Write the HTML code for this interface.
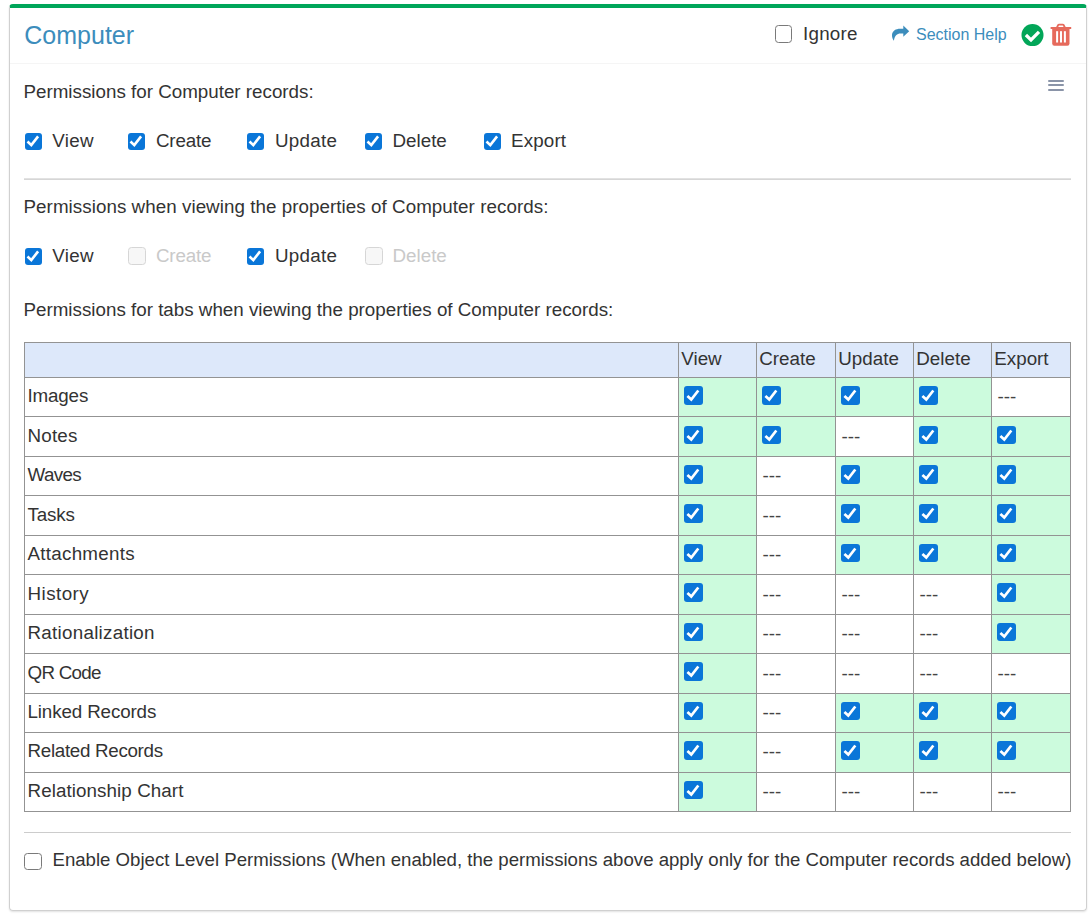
<!DOCTYPE html>
<html><head><meta charset="utf-8"><style>
html,body{margin:0;padding:0;background:#fff;width:1092px;height:919px;overflow:hidden;position:relative}
.t{position:absolute;white-space:nowrap;line-height:20px;font-family:'Liberation Sans', sans-serif}
.r{position:absolute}
.ic{position:absolute}
.card{position:absolute;left:9px;top:4px;width:1076px;height:902px;border:1px solid #d0d0d0;border-top:4px solid #00a65a;border-radius:4px;box-shadow:0 1px 2px rgba(0,0,0,0.12)}
.cb{position:absolute;background:#0a76d8;border-radius:3px;box-sizing:border-box}
.cb svg{display:block}
.cbe{position:absolute;box-sizing:border-box;border:1.5px solid #7a7a7a;border-radius:3.5px;background:#fff}
.cbd{position:absolute;box-sizing:border-box;border:1.5px solid #d6d6d6;border-radius:3.5px;background:#f7f7f7}
</style></head><body>
<div class="card"></div>
<div class="r" style="left:10px;top:63px;width:1076px;height:1px;background:#f5f5f5"></div>
<div class="t" style="left:24.3px;top:25px;font-size:25px;color:#3c8dbc;">Computer</div>
<div class="cbe" style="left:775px;top:25.2px;width:17.4px;height:17.4px"></div>
<div class="t" style="left:803px;top:24px;font-size:18.8px;color:#333;letter-spacing:0.25px">Ignore</div>
<svg class="ic" style="left:890px;top:22px" width="22" height="22" viewBox="0 0 22 22"><path d="M13.3 3.6 L19.2 9.2 L13.3 14.7 V11.4 H10.5 C7 11.4 4.6 13.6 3.9 18.8 C2.6 17 1.9 15 2 13 C2.3 8.8 6 6.8 10 6.8 H13.3 Z" fill="#3c8dbc"/></svg>
<div class="t" style="left:916px;top:25px;font-size:16px;color:#3c8dbc;">Section Help</div>
<svg class="ic" style="left:1020px;top:23px" width="25" height="25" viewBox="0 0 25 25"><circle cx="12.5" cy="12.1" r="11" fill="#02a658"/><path d="M5.9 12.0 L11 16.9 L19.0 8.9" fill="none" stroke="#fff" stroke-width="3.3"/></svg>
<svg class="ic" style="left:1049px;top:22px" width="24" height="26" viewBox="0 0 24 26"><path d="M1.6 5 H22.2 V7 H1.6 Z" fill="#e66a5c"/><path d="M6.9 5.6 L8.4 2.6 Q8.9 1.7 10 1.7 H13.8 Q14.9 1.7 15.4 2.6 L16.9 5.6 H14.9 L13.8 3.6 H10 L8.9 5.6 Z" fill="#e66a5c"/><path d="M3.2 6.5 H20.5 V21.6 Q20.5 23.8 18.3 23.8 H5.4 Q3.2 23.8 3.2 21.6 Z" fill="#e66a5c"/><rect x="7.1" y="9.2" width="2" height="11.3" fill="#fff"/><rect x="11.0" y="9.2" width="2" height="11.3" fill="#fff"/><rect x="14.9" y="9.2" width="2" height="11.3" fill="#fff"/></svg>
<div class="r" style="left:1048px;top:79.5px;width:15.5px;height:2px;background:#8a94a8;border-radius:1px"></div>
<div class="r" style="left:1048px;top:84.4px;width:15.5px;height:2px;background:#8a94a8;border-radius:1px"></div>
<div class="r" style="left:1048px;top:89.3px;width:15.5px;height:2px;background:#8a94a8;border-radius:1px"></div>
<div class="t" style="left:23.5px;top:82px;font-size:18.8px;color:#333;">Permissions for Computer records:</div>
<div class="cb" style="left:24.5px;top:133px;width:17px;height:17px"><svg width="100%" height="100%" viewBox="0 0 17 17"><path d="M2.5 8.5 L6.3 12.1 L13.1 3.4" fill="none" stroke="#fff" stroke-width="2.6" stroke-linecap="butt" stroke-linejoin="miter"/></svg></div>
<div class="t" style="left:52.3px;top:131px;font-size:18.8px;color:#333;letter-spacing:0.33px">View</div>
<div class="cb" style="left:128px;top:133px;width:17px;height:17px"><svg width="100%" height="100%" viewBox="0 0 17 17"><path d="M2.5 8.5 L6.3 12.1 L13.1 3.4" fill="none" stroke="#fff" stroke-width="2.6" stroke-linecap="butt" stroke-linejoin="miter"/></svg></div>
<div class="t" style="left:156px;top:131px;font-size:18.8px;color:#333;letter-spacing:-0.2px">Create</div>
<div class="cb" style="left:247px;top:133px;width:17px;height:17px"><svg width="100%" height="100%" viewBox="0 0 17 17"><path d="M2.5 8.5 L6.3 12.1 L13.1 3.4" fill="none" stroke="#fff" stroke-width="2.6" stroke-linecap="butt" stroke-linejoin="miter"/></svg></div>
<div class="t" style="left:275px;top:131px;font-size:18.8px;color:#333;letter-spacing:0.3px">Update</div>
<div class="cb" style="left:365px;top:133px;width:17px;height:17px"><svg width="100%" height="100%" viewBox="0 0 17 17"><path d="M2.5 8.5 L6.3 12.1 L13.1 3.4" fill="none" stroke="#fff" stroke-width="2.6" stroke-linecap="butt" stroke-linejoin="miter"/></svg></div>
<div class="t" style="left:392.5px;top:131px;font-size:18.8px;color:#333;letter-spacing:0px">Delete</div>
<div class="cb" style="left:483.5px;top:133px;width:17px;height:17px"><svg width="100%" height="100%" viewBox="0 0 17 17"><path d="M2.5 8.5 L6.3 12.1 L13.1 3.4" fill="none" stroke="#fff" stroke-width="2.6" stroke-linecap="butt" stroke-linejoin="miter"/></svg></div>
<div class="t" style="left:511px;top:131px;font-size:18.8px;color:#333;letter-spacing:0.15px">Export</div>
<div class="r" style="left:24px;top:178px;width:1047px;height:1px;background:#e2e2e2"></div>
<div class="r" style="left:24px;top:179px;width:1047px;height:1px;background:#d6d6d6"></div>
<div class="t" style="left:23.5px;top:197px;font-size:18.8px;color:#333;letter-spacing:0.05px">Permissions when viewing the properties of Computer records:</div>
<div class="cb" style="left:24.5px;top:248px;width:17px;height:17px"><svg width="100%" height="100%" viewBox="0 0 17 17"><path d="M2.5 8.5 L6.3 12.1 L13.1 3.4" fill="none" stroke="#fff" stroke-width="2.6" stroke-linecap="butt" stroke-linejoin="miter"/></svg></div>
<div class="t" style="left:52.3px;top:246px;font-size:18.8px;color:#333;letter-spacing:0.33px">View</div>
<div class="cbd" style="left:127.8px;top:247.2px;width:18.3px;height:18.3px"></div>
<div class="t" style="left:156px;top:246px;font-size:18.8px;color:#c9c9c9;letter-spacing:-0.2px">Create</div>
<div class="cb" style="left:247px;top:248px;width:17px;height:17px"><svg width="100%" height="100%" viewBox="0 0 17 17"><path d="M2.5 8.5 L6.3 12.1 L13.1 3.4" fill="none" stroke="#fff" stroke-width="2.6" stroke-linecap="butt" stroke-linejoin="miter"/></svg></div>
<div class="t" style="left:275px;top:246px;font-size:18.8px;color:#333;letter-spacing:0.3px">Update</div>
<div class="cbd" style="left:364.8px;top:247.2px;width:18.3px;height:18.3px"></div>
<div class="t" style="left:392.5px;top:246px;font-size:18.8px;color:#c9c9c9;letter-spacing:0px">Delete</div>
<div class="t" style="left:23.5px;top:300px;font-size:18.8px;color:#333;">Permissions for tabs when viewing the properties of Computer records:</div>
<div class="r" style="left:24px;top:342px;width:1047px;height:35px;background:#dde8fa"></div>
<div class="r" style="left:678px;top:377px;width:78px;height:39px;background:#ccfbdd"></div>
<div class="r" style="left:756px;top:377px;width:79px;height:39px;background:#ccfbdd"></div>
<div class="r" style="left:835px;top:377px;width:78px;height:39px;background:#ccfbdd"></div>
<div class="r" style="left:913px;top:377px;width:78px;height:39px;background:#ccfbdd"></div>
<div class="r" style="left:678px;top:416px;width:78px;height:40px;background:#ccfbdd"></div>
<div class="r" style="left:756px;top:416px;width:79px;height:40px;background:#ccfbdd"></div>
<div class="r" style="left:913px;top:416px;width:78px;height:40px;background:#ccfbdd"></div>
<div class="r" style="left:991px;top:416px;width:79px;height:40px;background:#ccfbdd"></div>
<div class="r" style="left:678px;top:456px;width:78px;height:39px;background:#ccfbdd"></div>
<div class="r" style="left:835px;top:456px;width:78px;height:39px;background:#ccfbdd"></div>
<div class="r" style="left:913px;top:456px;width:78px;height:39px;background:#ccfbdd"></div>
<div class="r" style="left:991px;top:456px;width:79px;height:39px;background:#ccfbdd"></div>
<div class="r" style="left:678px;top:495px;width:78px;height:40px;background:#ccfbdd"></div>
<div class="r" style="left:835px;top:495px;width:78px;height:40px;background:#ccfbdd"></div>
<div class="r" style="left:913px;top:495px;width:78px;height:40px;background:#ccfbdd"></div>
<div class="r" style="left:991px;top:495px;width:79px;height:40px;background:#ccfbdd"></div>
<div class="r" style="left:678px;top:535px;width:78px;height:39px;background:#ccfbdd"></div>
<div class="r" style="left:835px;top:535px;width:78px;height:39px;background:#ccfbdd"></div>
<div class="r" style="left:913px;top:535px;width:78px;height:39px;background:#ccfbdd"></div>
<div class="r" style="left:991px;top:535px;width:79px;height:39px;background:#ccfbdd"></div>
<div class="r" style="left:678px;top:574px;width:78px;height:40px;background:#ccfbdd"></div>
<div class="r" style="left:991px;top:574px;width:79px;height:40px;background:#ccfbdd"></div>
<div class="r" style="left:678px;top:614px;width:78px;height:39px;background:#ccfbdd"></div>
<div class="r" style="left:991px;top:614px;width:79px;height:39px;background:#ccfbdd"></div>
<div class="r" style="left:678px;top:653px;width:78px;height:40px;background:#ccfbdd"></div>
<div class="r" style="left:678px;top:693px;width:78px;height:39px;background:#ccfbdd"></div>
<div class="r" style="left:835px;top:693px;width:78px;height:39px;background:#ccfbdd"></div>
<div class="r" style="left:913px;top:693px;width:78px;height:39px;background:#ccfbdd"></div>
<div class="r" style="left:991px;top:693px;width:79px;height:39px;background:#ccfbdd"></div>
<div class="r" style="left:678px;top:732px;width:78px;height:40px;background:#ccfbdd"></div>
<div class="r" style="left:835px;top:732px;width:78px;height:40px;background:#ccfbdd"></div>
<div class="r" style="left:913px;top:732px;width:78px;height:40px;background:#ccfbdd"></div>
<div class="r" style="left:991px;top:732px;width:79px;height:40px;background:#ccfbdd"></div>
<div class="r" style="left:678px;top:772px;width:78px;height:39px;background:#ccfbdd"></div>
<div class="r" style="left:24px;top:342px;width:1047px;height:1px;background:#939393"></div>
<div class="r" style="left:24px;top:377px;width:1047px;height:1px;background:#939393"></div>
<div class="r" style="left:24px;top:416px;width:1047px;height:1px;background:#939393"></div>
<div class="r" style="left:24px;top:456px;width:1047px;height:1px;background:#939393"></div>
<div class="r" style="left:24px;top:495px;width:1047px;height:1px;background:#939393"></div>
<div class="r" style="left:24px;top:535px;width:1047px;height:1px;background:#939393"></div>
<div class="r" style="left:24px;top:574px;width:1047px;height:1px;background:#939393"></div>
<div class="r" style="left:24px;top:614px;width:1047px;height:1px;background:#939393"></div>
<div class="r" style="left:24px;top:653px;width:1047px;height:1px;background:#939393"></div>
<div class="r" style="left:24px;top:693px;width:1047px;height:1px;background:#939393"></div>
<div class="r" style="left:24px;top:732px;width:1047px;height:1px;background:#939393"></div>
<div class="r" style="left:24px;top:772px;width:1047px;height:1px;background:#939393"></div>
<div class="r" style="left:24px;top:811px;width:1047px;height:1px;background:#939393"></div>
<div class="r" style="left:24px;top:342px;width:1px;height:470px;background:#939393"></div>
<div class="r" style="left:678px;top:342px;width:1px;height:470px;background:#939393"></div>
<div class="r" style="left:756px;top:342px;width:1px;height:470px;background:#939393"></div>
<div class="r" style="left:835px;top:342px;width:1px;height:470px;background:#939393"></div>
<div class="r" style="left:913px;top:342px;width:1px;height:470px;background:#939393"></div>
<div class="r" style="left:991px;top:342px;width:1px;height:470px;background:#939393"></div>
<div class="r" style="left:1070px;top:342px;width:1px;height:470px;background:#939393"></div>
<div class="t" style="left:681.3px;top:349px;font-size:18.8px;color:#333;">View</div>
<div class="t" style="left:759.3px;top:349px;font-size:18.8px;color:#333;">Create</div>
<div class="t" style="left:838.3px;top:349px;font-size:18.8px;color:#333;">Update</div>
<div class="t" style="left:916.3px;top:349px;font-size:18.8px;color:#333;">Delete</div>
<div class="t" style="left:994.3px;top:349px;font-size:18.8px;color:#333;">Export</div>
<div class="t" style="left:27.5px;top:386px;font-size:18.8px;color:#333;letter-spacing:-0.160px">Images</div>
<div class="cb" style="left:684.1px;top:386.1px;width:18.5px;height:18.5px"><svg width="100%" height="100%" viewBox="0 0 18.5 18.5"><path d="M3.4 9.9 L7.3 13.5 L14.3 4.5" fill="none" stroke="#fff" stroke-width="2.7"/></svg></div>
<div class="cb" style="left:762.1px;top:386.1px;width:18.5px;height:18.5px"><svg width="100%" height="100%" viewBox="0 0 18.5 18.5"><path d="M3.4 9.9 L7.3 13.5 L14.3 4.5" fill="none" stroke="#fff" stroke-width="2.7"/></svg></div>
<div class="cb" style="left:841.1px;top:386.1px;width:18.5px;height:18.5px"><svg width="100%" height="100%" viewBox="0 0 18.5 18.5"><path d="M3.4 9.9 L7.3 13.5 L14.3 4.5" fill="none" stroke="#fff" stroke-width="2.7"/></svg></div>
<div class="cb" style="left:919.1px;top:386.1px;width:18.5px;height:18.5px"><svg width="100%" height="100%" viewBox="0 0 18.5 18.5"><path d="M3.4 9.9 L7.3 13.5 L14.3 4.5" fill="none" stroke="#fff" stroke-width="2.7"/></svg></div>
<div class="t" style="left:997.6px;top:387px;font-size:18.8px;color:#444;">---</div>
<div class="t" style="left:27.5px;top:426px;font-size:18.8px;color:#333;letter-spacing:0.200px">Notes</div>
<div class="cb" style="left:684.1px;top:425.55px;width:18.5px;height:18.5px"><svg width="100%" height="100%" viewBox="0 0 18.5 18.5"><path d="M3.4 9.9 L7.3 13.5 L14.3 4.5" fill="none" stroke="#fff" stroke-width="2.7"/></svg></div>
<div class="cb" style="left:762.1px;top:425.55px;width:18.5px;height:18.5px"><svg width="100%" height="100%" viewBox="0 0 18.5 18.5"><path d="M3.4 9.9 L7.3 13.5 L14.3 4.5" fill="none" stroke="#fff" stroke-width="2.7"/></svg></div>
<div class="t" style="left:841.6px;top:427px;font-size:18.8px;color:#444;">---</div>
<div class="cb" style="left:919.1px;top:425.55px;width:18.5px;height:18.5px"><svg width="100%" height="100%" viewBox="0 0 18.5 18.5"><path d="M3.4 9.9 L7.3 13.5 L14.3 4.5" fill="none" stroke="#fff" stroke-width="2.7"/></svg></div>
<div class="cb" style="left:997.1px;top:425.55px;width:18.5px;height:18.5px"><svg width="100%" height="100%" viewBox="0 0 18.5 18.5"><path d="M3.4 9.9 L7.3 13.5 L14.3 4.5" fill="none" stroke="#fff" stroke-width="2.7"/></svg></div>
<div class="t" style="left:27.5px;top:465px;font-size:18.8px;color:#333;letter-spacing:-0.650px">Waves</div>
<div class="cb" style="left:684.1px;top:465.0px;width:18.5px;height:18.5px"><svg width="100%" height="100%" viewBox="0 0 18.5 18.5"><path d="M3.4 9.9 L7.3 13.5 L14.3 4.5" fill="none" stroke="#fff" stroke-width="2.7"/></svg></div>
<div class="t" style="left:762.6px;top:466px;font-size:18.8px;color:#444;">---</div>
<div class="cb" style="left:841.1px;top:465.0px;width:18.5px;height:18.5px"><svg width="100%" height="100%" viewBox="0 0 18.5 18.5"><path d="M3.4 9.9 L7.3 13.5 L14.3 4.5" fill="none" stroke="#fff" stroke-width="2.7"/></svg></div>
<div class="cb" style="left:919.1px;top:465.0px;width:18.5px;height:18.5px"><svg width="100%" height="100%" viewBox="0 0 18.5 18.5"><path d="M3.4 9.9 L7.3 13.5 L14.3 4.5" fill="none" stroke="#fff" stroke-width="2.7"/></svg></div>
<div class="cb" style="left:997.1px;top:465.0px;width:18.5px;height:18.5px"><svg width="100%" height="100%" viewBox="0 0 18.5 18.5"><path d="M3.4 9.9 L7.3 13.5 L14.3 4.5" fill="none" stroke="#fff" stroke-width="2.7"/></svg></div>
<div class="t" style="left:27.5px;top:505px;font-size:18.8px;color:#333;letter-spacing:-0.175px">Tasks</div>
<div class="cb" style="left:684.1px;top:504.45px;width:18.5px;height:18.5px"><svg width="100%" height="100%" viewBox="0 0 18.5 18.5"><path d="M3.4 9.9 L7.3 13.5 L14.3 4.5" fill="none" stroke="#fff" stroke-width="2.7"/></svg></div>
<div class="t" style="left:762.6px;top:506px;font-size:18.8px;color:#444;">---</div>
<div class="cb" style="left:841.1px;top:504.45px;width:18.5px;height:18.5px"><svg width="100%" height="100%" viewBox="0 0 18.5 18.5"><path d="M3.4 9.9 L7.3 13.5 L14.3 4.5" fill="none" stroke="#fff" stroke-width="2.7"/></svg></div>
<div class="cb" style="left:919.1px;top:504.45px;width:18.5px;height:18.5px"><svg width="100%" height="100%" viewBox="0 0 18.5 18.5"><path d="M3.4 9.9 L7.3 13.5 L14.3 4.5" fill="none" stroke="#fff" stroke-width="2.7"/></svg></div>
<div class="cb" style="left:997.1px;top:504.45px;width:18.5px;height:18.5px"><svg width="100%" height="100%" viewBox="0 0 18.5 18.5"><path d="M3.4 9.9 L7.3 13.5 L14.3 4.5" fill="none" stroke="#fff" stroke-width="2.7"/></svg></div>
<div class="t" style="left:27.5px;top:544px;font-size:18.8px;color:#333;letter-spacing:0.270px">Attachments</div>
<div class="cb" style="left:684.1px;top:543.9px;width:18.5px;height:18.5px"><svg width="100%" height="100%" viewBox="0 0 18.5 18.5"><path d="M3.4 9.9 L7.3 13.5 L14.3 4.5" fill="none" stroke="#fff" stroke-width="2.7"/></svg></div>
<div class="t" style="left:762.6px;top:545px;font-size:18.8px;color:#444;">---</div>
<div class="cb" style="left:841.1px;top:543.9px;width:18.5px;height:18.5px"><svg width="100%" height="100%" viewBox="0 0 18.5 18.5"><path d="M3.4 9.9 L7.3 13.5 L14.3 4.5" fill="none" stroke="#fff" stroke-width="2.7"/></svg></div>
<div class="cb" style="left:919.1px;top:543.9px;width:18.5px;height:18.5px"><svg width="100%" height="100%" viewBox="0 0 18.5 18.5"><path d="M3.4 9.9 L7.3 13.5 L14.3 4.5" fill="none" stroke="#fff" stroke-width="2.7"/></svg></div>
<div class="cb" style="left:997.1px;top:543.9px;width:18.5px;height:18.5px"><svg width="100%" height="100%" viewBox="0 0 18.5 18.5"><path d="M3.4 9.9 L7.3 13.5 L14.3 4.5" fill="none" stroke="#fff" stroke-width="2.7"/></svg></div>
<div class="t" style="left:27.5px;top:584px;font-size:18.8px;color:#333;letter-spacing:0.467px">History</div>
<div class="cb" style="left:684.1px;top:583.35px;width:18.5px;height:18.5px"><svg width="100%" height="100%" viewBox="0 0 18.5 18.5"><path d="M3.4 9.9 L7.3 13.5 L14.3 4.5" fill="none" stroke="#fff" stroke-width="2.7"/></svg></div>
<div class="t" style="left:762.6px;top:585px;font-size:18.8px;color:#444;">---</div>
<div class="t" style="left:841.6px;top:585px;font-size:18.8px;color:#444;">---</div>
<div class="t" style="left:919.6px;top:585px;font-size:18.8px;color:#444;">---</div>
<div class="cb" style="left:997.1px;top:583.35px;width:18.5px;height:18.5px"><svg width="100%" height="100%" viewBox="0 0 18.5 18.5"><path d="M3.4 9.9 L7.3 13.5 L14.3 4.5" fill="none" stroke="#fff" stroke-width="2.7"/></svg></div>
<div class="t" style="left:27.5px;top:623px;font-size:18.8px;color:#333;letter-spacing:0.271px">Rationalization</div>
<div class="cb" style="left:684.1px;top:622.8px;width:18.5px;height:18.5px"><svg width="100%" height="100%" viewBox="0 0 18.5 18.5"><path d="M3.4 9.9 L7.3 13.5 L14.3 4.5" fill="none" stroke="#fff" stroke-width="2.7"/></svg></div>
<div class="t" style="left:762.6px;top:624px;font-size:18.8px;color:#444;">---</div>
<div class="t" style="left:841.6px;top:624px;font-size:18.8px;color:#444;">---</div>
<div class="t" style="left:919.6px;top:624px;font-size:18.8px;color:#444;">---</div>
<div class="cb" style="left:997.1px;top:622.8px;width:18.5px;height:18.5px"><svg width="100%" height="100%" viewBox="0 0 18.5 18.5"><path d="M3.4 9.9 L7.3 13.5 L14.3 4.5" fill="none" stroke="#fff" stroke-width="2.7"/></svg></div>
<div class="t" style="left:27.5px;top:663px;font-size:18.8px;color:#333;letter-spacing:-0.717px">QR Code</div>
<div class="cb" style="left:684.1px;top:662.25px;width:18.5px;height:18.5px"><svg width="100%" height="100%" viewBox="0 0 18.5 18.5"><path d="M3.4 9.9 L7.3 13.5 L14.3 4.5" fill="none" stroke="#fff" stroke-width="2.7"/></svg></div>
<div class="t" style="left:762.6px;top:664px;font-size:18.8px;color:#444;">---</div>
<div class="t" style="left:841.6px;top:664px;font-size:18.8px;color:#444;">---</div>
<div class="t" style="left:919.6px;top:664px;font-size:18.8px;color:#444;">---</div>
<div class="t" style="left:997.6px;top:664px;font-size:18.8px;color:#444;">---</div>
<div class="t" style="left:27.5px;top:702px;font-size:18.8px;color:#333;letter-spacing:-0.131px">Linked Records</div>
<div class="cb" style="left:684.1px;top:701.7px;width:18.5px;height:18.5px"><svg width="100%" height="100%" viewBox="0 0 18.5 18.5"><path d="M3.4 9.9 L7.3 13.5 L14.3 4.5" fill="none" stroke="#fff" stroke-width="2.7"/></svg></div>
<div class="t" style="left:762.6px;top:703px;font-size:18.8px;color:#444;">---</div>
<div class="cb" style="left:841.1px;top:701.7px;width:18.5px;height:18.5px"><svg width="100%" height="100%" viewBox="0 0 18.5 18.5"><path d="M3.4 9.9 L7.3 13.5 L14.3 4.5" fill="none" stroke="#fff" stroke-width="2.7"/></svg></div>
<div class="cb" style="left:919.1px;top:701.7px;width:18.5px;height:18.5px"><svg width="100%" height="100%" viewBox="0 0 18.5 18.5"><path d="M3.4 9.9 L7.3 13.5 L14.3 4.5" fill="none" stroke="#fff" stroke-width="2.7"/></svg></div>
<div class="cb" style="left:997.1px;top:701.7px;width:18.5px;height:18.5px"><svg width="100%" height="100%" viewBox="0 0 18.5 18.5"><path d="M3.4 9.9 L7.3 13.5 L14.3 4.5" fill="none" stroke="#fff" stroke-width="2.7"/></svg></div>
<div class="t" style="left:27.5px;top:741px;font-size:18.8px;color:#333;letter-spacing:-0.307px">Related Records</div>
<div class="cb" style="left:684.1px;top:741.15px;width:18.5px;height:18.5px"><svg width="100%" height="100%" viewBox="0 0 18.5 18.5"><path d="M3.4 9.9 L7.3 13.5 L14.3 4.5" fill="none" stroke="#fff" stroke-width="2.7"/></svg></div>
<div class="t" style="left:762.6px;top:742px;font-size:18.8px;color:#444;">---</div>
<div class="cb" style="left:841.1px;top:741.15px;width:18.5px;height:18.5px"><svg width="100%" height="100%" viewBox="0 0 18.5 18.5"><path d="M3.4 9.9 L7.3 13.5 L14.3 4.5" fill="none" stroke="#fff" stroke-width="2.7"/></svg></div>
<div class="cb" style="left:919.1px;top:741.15px;width:18.5px;height:18.5px"><svg width="100%" height="100%" viewBox="0 0 18.5 18.5"><path d="M3.4 9.9 L7.3 13.5 L14.3 4.5" fill="none" stroke="#fff" stroke-width="2.7"/></svg></div>
<div class="cb" style="left:997.1px;top:741.15px;width:18.5px;height:18.5px"><svg width="100%" height="100%" viewBox="0 0 18.5 18.5"><path d="M3.4 9.9 L7.3 13.5 L14.3 4.5" fill="none" stroke="#fff" stroke-width="2.7"/></svg></div>
<div class="t" style="left:27.5px;top:781px;font-size:18.8px;color:#333;letter-spacing:0.082px">Relationship Chart</div>
<div class="cb" style="left:684.1px;top:780.6px;width:18.5px;height:18.5px"><svg width="100%" height="100%" viewBox="0 0 18.5 18.5"><path d="M3.4 9.9 L7.3 13.5 L14.3 4.5" fill="none" stroke="#fff" stroke-width="2.7"/></svg></div>
<div class="t" style="left:762.6px;top:782px;font-size:18.8px;color:#444;">---</div>
<div class="t" style="left:841.6px;top:782px;font-size:18.8px;color:#444;">---</div>
<div class="t" style="left:919.6px;top:782px;font-size:18.8px;color:#444;">---</div>
<div class="t" style="left:997.6px;top:782px;font-size:18.8px;color:#444;">---</div>
<div class="r" style="left:24px;top:832px;width:1047px;height:1px;background:#cccccc"></div>
<div class="cbe" style="left:24.4px;top:853.1px;width:17.2px;height:17.2px"></div>
<div class="t" style="left:52.5px;top:850px;font-size:18.65px;color:#333;letter-spacing:-0.015px">Enable Object Level Permissions (When enabled, the permissions above apply only for the Computer records added below)</div>
</body></html>
